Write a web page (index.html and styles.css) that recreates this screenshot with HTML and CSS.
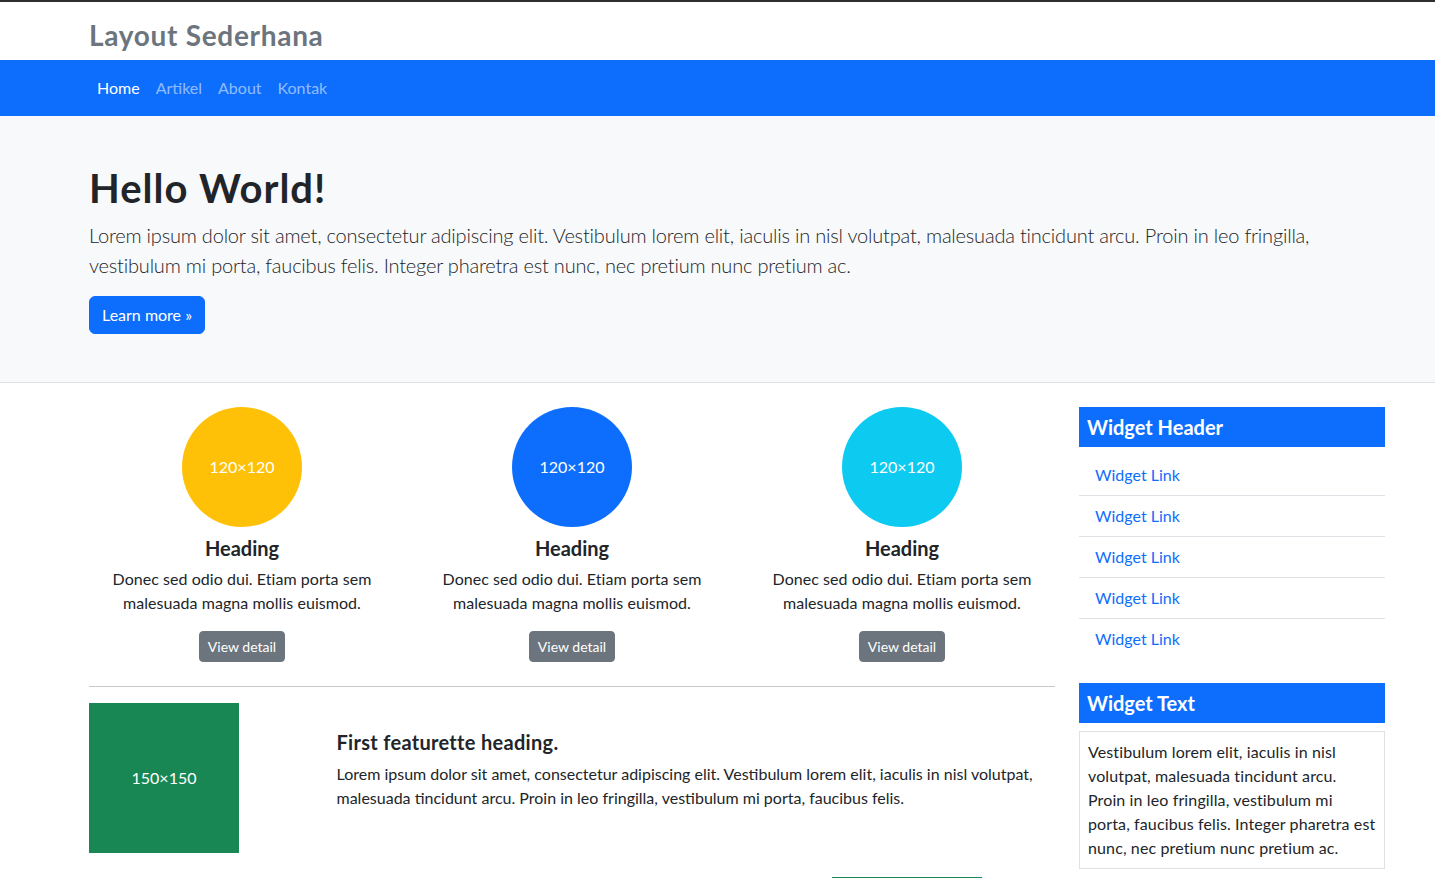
FILE: index.html
```html
<!DOCTYPE html>
<html lang="id">
<head>
<meta charset="utf-8">
<title>Layout Sederhana</title>
<link rel="stylesheet" href="styles.css">
</head>
<body>
<header class="site-header">
  <div class="container">
    <div class="brand">Layout Sederhana</div>
  </div>
</header>
<nav class="navbar">
  <div class="container nav-inner">
    <a class="nav-link active" href="#">Home</a>
    <a class="nav-link" href="#">Artikel</a>
    <a class="nav-link" href="#">About</a>
    <a class="nav-link" href="#">Kontak</a>
  </div>
</nav>
<section class="jumbotron">
  <div class="container">
    <h1 class="jumbo-title">Hello World!</h1>
    <p class="lead">Lorem ipsum dolor sit amet, consectetur adipiscing elit. Vestibulum lorem elit, iaculis in nisl volutpat, malesuada tincidunt arcu. Proin in leo fringilla, vestibulum mi porta, faucibus felis. Integer pharetra est nunc, nec pretium nunc pretium ac.</p>
    <a class="btn btn-primary" href="#">Learn more &raquo;</a>
  </div>
</section>
<div class="container main-row">
  <main class="main-col">
    <div class="cols">
      <div class="col">
        <div class="circle c-yellow">120×120</div>
        <h2 class="col-heading">Heading</h2>
        <p class="col-text">Donec sed odio dui. Etiam porta sem malesuada magna mollis euismod.</p>
        <a class="btn btn-sm btn-secondary" href="#">View detail</a>
      </div>
      <div class="col">
        <div class="circle c-blue">120×120</div>
        <h2 class="col-heading">Heading</h2>
        <p class="col-text">Donec sed odio dui. Etiam porta sem malesuada magna mollis euismod.</p>
        <a class="btn btn-sm btn-secondary" href="#">View detail</a>
      </div>
      <div class="col">
        <div class="circle c-cyan">120×120</div>
        <h2 class="col-heading">Heading</h2>
        <p class="col-text">Donec sed odio dui. Etiam porta sem malesuada magna mollis euismod.</p>
        <a class="btn btn-sm btn-secondary" href="#">View detail</a>
      </div>
    </div>
    <hr class="divider">
    <div class="featurette">
      <div class="feat-img">150×150</div>
      <div class="feat-body">
        <h2 class="feat-heading">First featurette heading.</h2>
        <p class="feat-text">Lorem ipsum dolor sit amet, consectetur adipiscing elit. Vestibulum lorem elit, iaculis in nisl volutpat, malesuada tincidunt arcu. Proin in leo fringilla, vestibulum mi porta, faucibus felis.</p>
      </div>
    </div>
    <div class="featurette reverse">
      <div class="feat-body"></div>
      <div class="feat-img"></div>
    </div>
  </main>
  <aside class="sidebar">
    <div class="widget">
      <h3 class="widget-header">Widget Header</h3>
      <ul class="widget-list">
        <li><a href="#">Widget Link</a></li>
        <li><a href="#">Widget Link</a></li>
        <li><a href="#">Widget Link</a></li>
        <li><a href="#">Widget Link</a></li>
        <li><a href="#">Widget Link</a></li>
      </ul>
    </div>
    <div class="widget">
      <h3 class="widget-header">Widget Text</h3>
      <div class="widget-box">Vestibulum lorem elit, iaculis in nisl volutpat, malesuada tincidunt arcu. Proin in leo fringilla, vestibulum mi porta, faucibus felis. Integer pharetra est nunc, nec pretium nunc pretium ac.</div>
    </div>
  </aside>
</div>
</body>
</html>
```
FILE: styles.css
```css
* { box-sizing: border-box; }
html, body { margin: 0; padding: 0; }
body {
  font-family: Lato, "Liberation Sans", sans-serif;
  font-size: 16px;
  line-height: 24px;
  color: #212529;
  background: #fff;
  border-top: 2px solid #2e2e2e;
}
a { text-decoration: none; }
.container {
  width: 1296px;
  margin-left: 89px;
}
/* header */
.site-header { padding: 16px 0 8px; }
.brand {
  font-size: 28px;
  font-weight: 700;
  line-height: 34px;
  color: #6c757d;
  letter-spacing: 0.7px;
}
/* navbar */
.navbar { background: #0d6efd; height: 56px; }
.nav-inner { display: flex; align-items: center; height: 56px; }
.nav-link {
  padding: 8px;
  color: rgba(255,255,255,.55);
  font-size: 16px;
  line-height: 24px;
}
.nav-link.active { color: #fff; }
/* jumbotron */
.jumbotron {
  background: #f8f9fa;
  padding: 48px 0;
  border-bottom: 1px solid #dee2e6;
}
.jumbo-title {
  margin: 0 0 8px;
  font-size: 40px;
  line-height: 48px;
  font-weight: 700;
  letter-spacing: 1px;
}
.lead {
  margin: 0 0 16px;
  font-size: 20px;
  line-height: 30px;
  font-weight: 300;
  letter-spacing: -0.2px;
}
.btn {
  display: inline-block;
  border: 1px solid transparent;
  border-radius: 6px;
  padding: 6px 12px;
  font-size: 16px;
  line-height: 24px;
  color: #fff;
}
.btn-primary { background: #0d6efd; border-color: #0d6efd; }
.btn-sm { padding: 4px 8px; font-size: 14px; line-height: 21px; border-radius: 4px; }
.btn-secondary { background: #6c757d; border-color: #6c757d; }
/* main layout */
.main-row {
  display: grid;
  grid-template-columns: 966px 306px;
  column-gap: 24px;
  margin-top: 24px;
  align-items: start;
}
.cols {
  display: grid;
  grid-template-columns: repeat(3, 1fr);
  column-gap: 24px;
}
.col { text-align: center; }
.circle {
  width: 120px;
  height: 120px;
  border-radius: 50%;
  margin: 0 auto 9px;
  display: flex;
  align-items: center;
  justify-content: center;
  color: #fff;
  font-size: 16px;
}
.c-yellow { background: #ffc107; }
.c-blue { background: #0d6efd; }
.c-cyan { background: #0dcaf0; }
.col-heading {
  margin: 0 0 7px;
  font-size: 20px;
  line-height: 24px;
  font-weight: 700;
}
.col-text { margin: 0 0 16px; letter-spacing: 0.05px; }
.divider {
  border: 0;
  border-top: 1px solid #c8c9ca;
  margin: 24px 0 16px;
}
.featurette {
  display: grid;
  grid-template-columns: 223.5px 1fr;
  column-gap: 24px;
  align-items: center;
  margin-bottom: 24px;
}
.featurette.reverse { grid-template-columns: 1fr 223.5px; }
.feat-img {
  width: 150px;
  height: 150px;
  background: #198754;
  color: #fff;
  display: flex;
  align-items: center;
  justify-content: center;
}
.feat-heading {
  margin: 0 0 8px;
  font-size: 20px;
  line-height: 24px;
  font-weight: 700;
  letter-spacing: 0.3px;
}
.feat-text { margin: 0 0 16px; }
/* sidebar */
.widget { margin-bottom: 24px; }
.widget-header {
  margin: 0 0 8px;
  background: #0d6efd;
  color: #fff;
  padding: 8px;
  font-size: 20px;
  line-height: 24px;
  font-weight: 700;
}
.widget-list { list-style: none; margin: 0; padding: 0; }
.widget-list li {
  padding: 8px 16px;
  border-bottom: 1px solid #dee2e6;
}
.widget-list li:last-child { border-bottom: 0; }
.widget-list a { color: #0d6efd; }
.widget-box {
  border: 1px solid #dee2e6;
  padding: 8px;
  letter-spacing: 0.12px;
}
```
